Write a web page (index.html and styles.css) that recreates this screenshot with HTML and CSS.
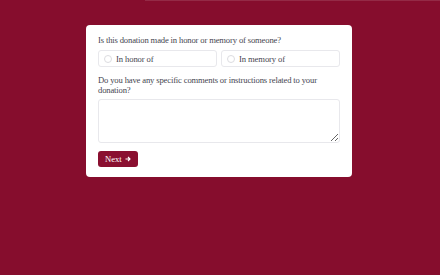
FILE: index.html
```html
<!DOCTYPE html>
<html lang="en">
<head>
    <meta charset="UTF-8">
    <meta name="viewport" content="width=device-width, initial-scale=1.0">
    <title>Donation</title>
    <link rel="stylesheet" href="styles.css">
</head>
<body>
    <div class="progress"><div class="progress-fill"></div></div>
    <div id="form-container">
        <div class="form-card">
            <div class="question">Is this donation made in honor or memory of someone?</div>
            <div class="choices">
                <label class="choice"><input type="radio" name="tribute"> In honor of</label>
                <label class="choice"><input type="radio" name="tribute"> In memory of</label>
            </div>
            <div class="question second">Do you have any specific comments or instructions related to your donation?</div>
            <textarea class="comments"></textarea>
            <button class="next-button">Next
                <svg width="6" height="6" viewBox="0 0 6 6"><path d="M0.5 3H5M3 1L5 3L3 5" fill="none" stroke="white" stroke-width="1.1"/></svg>
            </button>
        </div>
    </div>
</body>
</html>
```

FILE: styles.css
```css
body {
    margin: 0;
    background-color: #860d2d;
    font-family: "Liberation Serif", serif;
}

.progress {
    height: 1px;
    display: flex;
    justify-content: flex-end;
}

.progress-fill {
    width: 295px;
    background-color: rgba(255, 255, 255, 0.12);
}

#form-container {
    display: flex;
    justify-content: center;
    padding-top: 24px;
}

.form-card {
    width: 242px;
    background-color: white;
    border-radius: 4px;
    padding: 10px 12px;
    margin-left: -2px;
}

.question {
    font-size: 8.6px;
    letter-spacing: -0.15px;
    color: #45454f;
    line-height: 10px;
    margin-bottom: 5px;
}

.question.second {
    margin-top: 8px;
    margin-bottom: 4px;
}

.choices {
    display: grid;
    grid-template-columns: 1fr 1fr;
    gap: 4px;
}

.choice {
    display: flex;
    align-items: center;
    height: 15px;
    border: 1px solid #e8e8ec;
    border-radius: 3px;
    font-size: 8.6px;
    letter-spacing: -0.1px;
    color: #45454f;
}

.choice input {
    appearance: none;
    width: 8px;
    height: 8px;
    border: 1px solid #dcdce0;
    border-radius: 50%;
    margin: 0 4px 0 5px;
}

.comments {
    display: block;
    box-sizing: border-box;
    width: 100%;
    height: 44px;
    border: 1px solid #e8e8ec;
    border-radius: 3px;
    margin: 0 0 8px 0;
}

.next-button {
    display: flex;
    align-items: center;
    gap: 3px;
    background-color: #8a0f30;
    color: white;
    border: none;
    border-radius: 3px;
    font-family: "Liberation Serif", serif;
    font-size: 8.6px;
    padding: 0 7px;
    height: 16px;
}
```
